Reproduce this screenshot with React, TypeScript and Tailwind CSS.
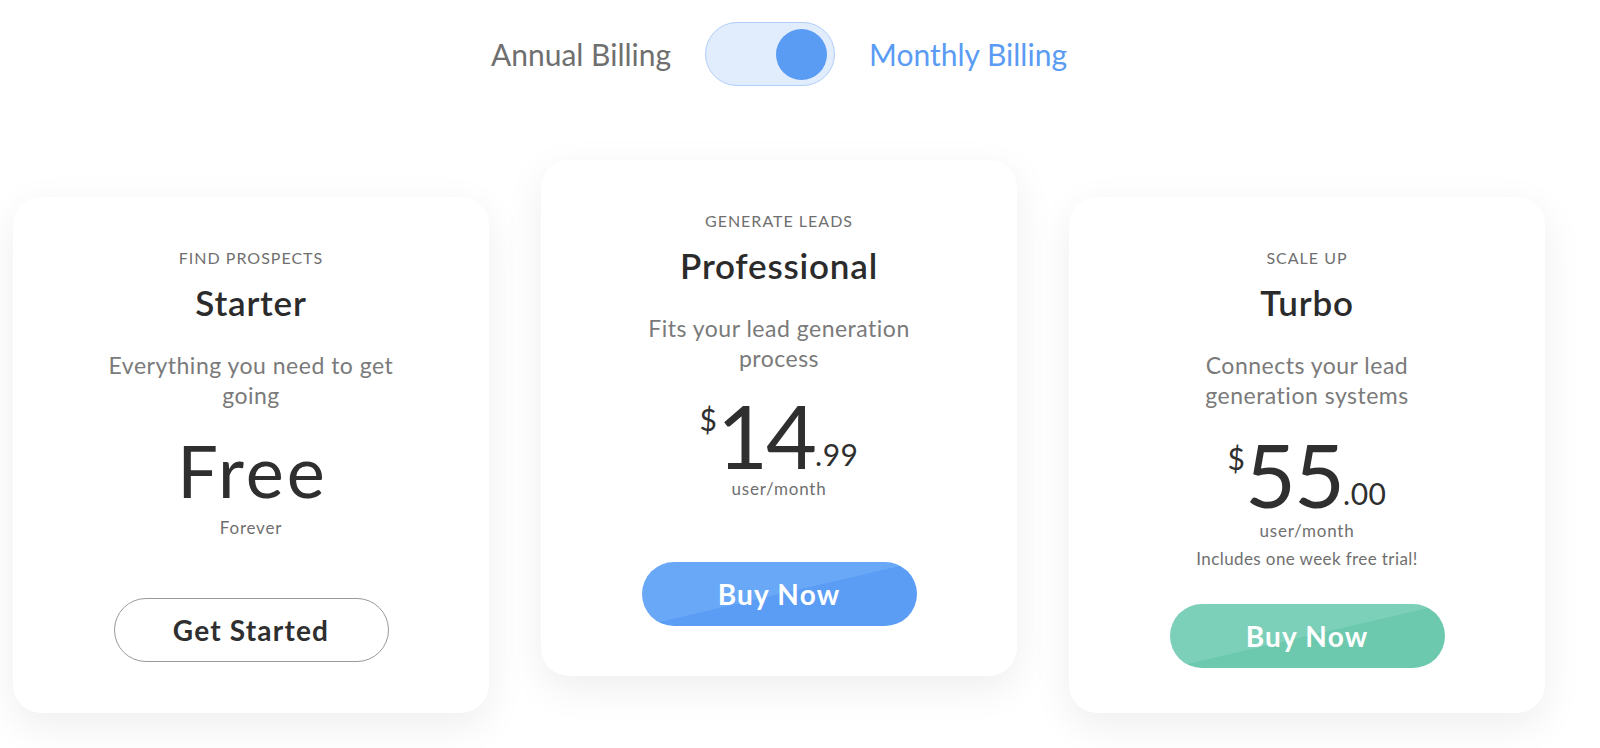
import React from 'react';

type Plan = {
  label: string;
  title: string;
  desc: [string, string];
  btnText: string;
  btnClass: string;
  featured?: boolean;
  price?: { dollars: string; cents: string };
  free?: boolean;
  trial?: string;
  priceMt: string;
  unitMt: string;
  btnMt: string;
};

const plans: Plan[] = [
  {
    label: 'FIND PROSPECTS',
    title: 'Starter',
    desc: ['Everything you need to get', 'going'],
    free: true,
    btnText: 'Get Started',
    btnClass: 'border border-[#9a9a9a] bg-white text-[#2f2f2f]',
    priceMt: 'mt-[20px]',
    unitMt: 'mt-[8px]',
    btnMt: 'mt-0',
  },
  {
    label: 'GENERATE LEADS',
    title: 'Professional',
    desc: ['Fits your lead generation', 'process'],
    price: { dollars: '14', cents: '.99' },
    btnText: 'Buy Now',
    btnClass: 'bg-[linear-gradient(to_bottom_right,#69a8f7_50%,#5b9cf5_50%)] text-white',
    featured: true,
    priceMt: 'mt-[18px]',
    unitMt: 'mt-0',
    btnMt: 'mt-[1px]',
  },
  {
    label: 'SCALE UP',
    title: 'Turbo',
    desc: ['Connects your lead', 'generation systems'],
    price: { dollars: '55', cents: '.00' },
    trial: 'Includes one week free trial!',
    btnText: 'Buy Now',
    btnClass: 'bg-[linear-gradient(to_bottom_right,#7ccfb8_50%,#6dc9ae_50%)] text-white',
    priceMt: 'mt-[20px]',
    unitMt: 'mt-[3px]',
    btnMt: 'mt-[6px]',
  },
];

const PlanCard = ({ plan }: { plan: Plan }) => {
  return (
    <div
      className={`flex flex-col items-center w-[476px] h-[516px] bg-white rounded-[28px] shadow-[0_12px_40px_rgba(0,0,0,0.07)] pt-[51px] ${
        plan.featured ? '' : 'mt-[37px]'
      }`}
    >
      <div className="flex flex-col items-center h-[350px]">
        <p className="text-[16px] leading-[20px] text-[#6f6f6f] tracking-[1px]">{plan.label}</p>
        <h2 className="mt-[14px] text-[35px] leading-[40px] font-semibold tracking-[0.8px] text-[#2b2b2b]">
          {plan.title}
        </h2>
        <p className="mt-[28px] text-[23px] leading-[30px] tracking-[0.5px] text-[#7a7a7a] text-center">
          {plan.desc[0]}
          <br />
          {plan.desc[1]}
        </p>
        {plan.free && (
          <>
            <p className={`${plan.priceMt} text-[72px] leading-[80px] tracking-[3px] pl-[3px] text-[#2f2f2f]`}>
              Free
            </p>
            <p className={`${plan.unitMt} text-[17px] leading-[20px] tracking-[0.8px] text-[#6f6f6f]`}>
              Forever
            </p>
          </>
        )}
        {plan.price && (
          <>
            <div className={`${plan.priceMt} flex items-start text-[#2f2f2f]`}>
              <span className="text-[30px] leading-[30px] mt-[13px]">$</span>
              <span className="text-[88px] leading-[88px] tracking-[-2px]">{plan.price.dollars}</span>
              <span className="text-[30px] leading-[30px] mt-[48px] tracking-[0.5px]">{plan.price.cents}</span>
            </div>
            <p className={`${plan.unitMt} text-[17px] leading-[20px] tracking-[0.8px] text-[#6f6f6f]`}>
              user/month
            </p>
            {plan.trial && (
              <p className="mt-[8px] text-[17px] leading-[20px] tracking-[0.4px] text-[#6f6f6f]">
                {plan.trial}
              </p>
            )}
          </>
        )}
      </div>
      <button
        className={`${plan.btnMt} w-[275px] h-[64px] rounded-full text-[28px] font-bold tracking-[1.2px] ${plan.btnClass}`}
      >
        {plan.btnText}
      </button>
    </div>
  );
};

const App = () => {
  return (
    <div className="w-[1558px] min-h-[748px] bg-white font-['Lato',sans-serif]">
      <div className="flex items-center justify-center gap-[34px] pt-[22px]">
        <span className="text-[30px] text-[#6f6f6f]">Annual Billing</span>
        <div className="flex items-center justify-end w-[130px] h-[64px] rounded-full bg-[#e1edfd] border border-[#b0cef8] pr-[7px]">
          <div className="w-[51px] h-[51px] rounded-full bg-[#5a9bf4]" />
        </div>
        <span className="text-[30px] text-[#5a9bf4]">Monthly Billing</span>
      </div>
      <div className="flex items-start justify-center gap-[52px] mt-[74px]">
        {plans.map((plan) => (
          <PlanCard key={plan.title} plan={plan} />
        ))}
      </div>
    </div>
  );
};

export default App;
